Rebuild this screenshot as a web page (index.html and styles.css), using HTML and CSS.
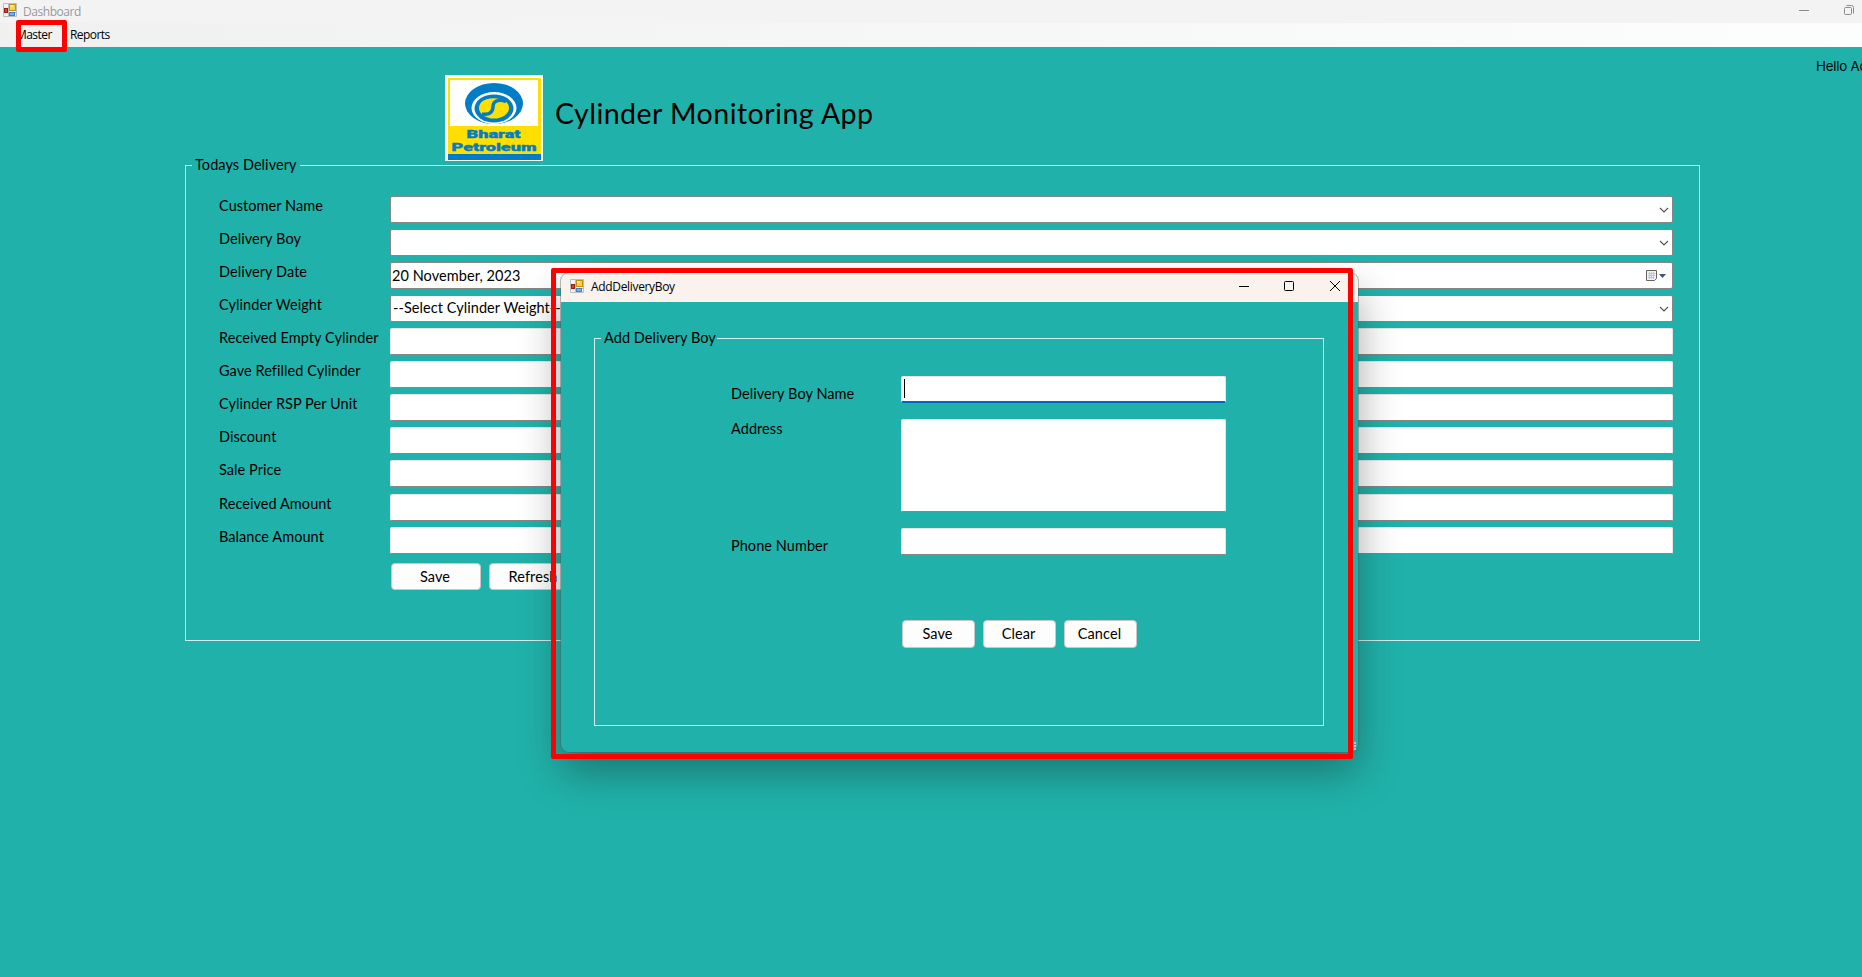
FILE: index.html
```html
<!DOCTYPE html>
<html lang="en">
<head>
<meta charset="utf-8">
<title>Dashboard</title>
<link rel="stylesheet" href="styles.css">
</head>
<body>
<svg width="0" height="0" class="defs">
  <symbol id="app" viewBox="0 0 14 14">
    <path d="M.5.5h13v13H.5zM.5 9.500h13M5.500.5v13" fill="#f4f4f4" stroke="#bcbcbc"/>
    <rect x="6.500" y="1.500" width="6" height="6" fill="#fbd04a" stroke="#c79007"/>
    <rect x="7" y="2" width="3" height="2" fill="#ffeaa0"/>
    <rect x="1.500" y="5.500" width="3" height="4" fill="#d8402c" stroke="#a01c12"/>
    <rect x="6.500" y="9.500" width="5" height="3" fill="#6fb4fa" stroke="#3d80d4"/>
  </symbol>
  <symbol id="chev" viewBox="0 0 10 6"><path d="M1 1l4 4 4-4" fill="none" stroke="#505050" stroke-width="1.100"/></symbol>
</svg>

<header class="titlebar">
  <svg class="app-icon"><use href="#app"/></svg>
  <span class="title">Dashboard</span>
  <svg class="win-controls" width="55" height="12" viewBox="0 0 55 12" fill="none" stroke="#8c8c8c"><path d="M0 6.500h10M47.500 1.500h5q2 0 2 2v6"/><rect x="45.500" y="3.500" width="7" height="7" rx="1"/></svg>
</header>
<nav class="menu"><span class="m-master">Master</span><span>Reports</span></nav>

<main class="page">
  <p class="hello">Hello Admin</p>
  <div class="brand">
    <svg class="logo" width="98" height="86" viewBox="0 0 98 86">
      <path fill="#fff" d="M0 0h98v86H0z"/>
      <path fill="#ffdf00" d="M3 3h93v76H3z"/>
      <path fill="#fff" d="M5 5h88v46H5z"/>
      <path fill="#007dc6" d="M3 79h93v6H3z"/>
      <ellipse cx="49" cy="28.500" rx="29" ry="20.500" fill="#007dc6"/>
      <ellipse cx="49" cy="33" rx="22.500" ry="16" fill="#fff"/>
      <ellipse cx="49" cy="33.500" rx="19.500" ry="14" fill="#007dc6"/>
      <ellipse cx="49" cy="33" rx="15" ry="10.500" fill="#ffdf00"/>
      <path d="M61 26.500c-8-3-13 0-13 5s-3 9-11 7.500" fill="none" stroke="#007dc6" stroke-width="3.500"/>
      <path d="M34 27q14-9 30 0" fill="none" stroke="#007dc6" stroke-width="1.500"/>
      <text x="21.500" y="63" textLength="54" lengthAdjust="spacingAndGlyphs">Bharat</text>
      <text x="6.500" y="76" textLength="85" lengthAdjust="spacingAndGlyphs">Petroleum</text>
    </svg>
    <h1>Cylinder Monitoring App</h1>
  </div>

  <section class="group delivery">
    <h2>Todays Delivery</h2>
    <div class="row"><label>Customer Name</label><div class="field combo"><svg class="chev"><use href="#chev"/></svg></div></div>
    <div class="row"><label>Delivery Boy</label><div class="field combo"><svg class="chev"><use href="#chev"/></svg></div></div>
    <div class="row"><label>Delivery Date</label><div class="field combo date"><span class="v-date">20 November, 2023</span>
      <svg class="cal" width="22" height="14" viewBox="0 0 22 14"><path d="M1.500 1.500h10v8l-2 2h-8z" fill="#eef2f4" stroke="#6b625e"/><path d="M3 4.500h7M3 6.500h7M3 8.500h6M4.500 3v7M6.500 3v7M8.500 3v7" stroke="#b4bcc2" stroke-width=".7"/><path d="M14 5h7l-3.500 4z" fill="#3c5488"/></svg></div></div>
    <div class="row"><label>Cylinder Weight</label><div class="field combo"><span class="v-weight">--Select Cylinder Weight--</span><svg class="chev"><use href="#chev"/></svg></div></div>
    <div class="row"><label>Received Empty Cylinder</label><div class="field"></div></div>
    <div class="row"><label>Gave Refilled Cylinder</label><div class="field"></div></div>
    <div class="row"><label>Cylinder RSP Per Unit</label><div class="field"></div></div>
    <div class="row"><label>Discount</label><div class="field"></div></div>
    <div class="row"><label>Sale Price</label><div class="field"></div></div>
    <div class="row extra"><label>Received Amount</label><div class="field"></div></div>
    <div class="row"><label>Balance Amount</label><div class="field"></div></div>
    <div class="buttons"><button>Save</button><button>Refresh</button></div>
  </section>
</main>

<div class="dialog">
  <header class="dialog-bar">
    <svg class="app-icon"><use href="#app"/></svg>
    <span class="title">AddDeliveryBoy</span>
    <svg class="win-controls" width="102" height="12" viewBox="0 0 102 12" fill="none" stroke="#000"><path d="M0 6.500h10"/><rect x="45.500" y="1.500" width="9" height="9" rx="1"/><path d="M91 1l10 10M101 1L91 11"/></svg>
  </header>
  <section class="group add">
    <h2>Add Delivery Boy</h2>
    <div class="row name"><label>Delivery Boy Name</label><div class="field focus"><i class="caret"></i></div></div>
    <div class="row address"><label>Address</label><div class="field"></div></div>
    <div class="row phone"><label>Phone Number</label><div class="field"></div></div>
    <div class="buttons"><button>Save</button><button>Clear</button><button>Cancel</button></div>
  </section>
  <svg class="grip" width="8" height="8" viewBox="0 0 8 8" fill="#b8c8c8"><path d="M6 0h2v2H6zM6 3h2v2H6zM6 6h2v2H6zM3 3h2v2H3zM3 6h2v2H3zM0 6h2v2H0z"/></svg>
</div>

<div class="mark mark-master"></div>
<div class="mark mark-dialog"></div>
</body>
</html>
```
FILE: styles.css
```css
* { box-sizing: border-box; }
body {
  margin: 0;
  width: 1862px;
  height: 977px;
  overflow: hidden;
  position: relative;
  background: #20b2aa;
  color: #000;
  font: 14.5px/18px Lato, "Noto Sans", sans-serif;
  letter-spacing: 0.06px;
  white-space: nowrap;
}
.defs { position: absolute; }
h1, h2, p { margin: 0; font-weight: 400; }

.titlebar {
  display: flex;
  align-items: center;
  height: 23px;
  padding: 0 8px 3px 3px;
  background: #f3f3f3;
  color: #999;
  font: 12px/16px "Open Sans", sans-serif;
  letter-spacing: -0.45px;
}
.titlebar .title { margin-left: 6px; padding-top: 4px; }
.titlebar .win-controls { margin-right: 0; }
.app-icon { width: 14px; height: 14px; flex: none; }
.win-controls { margin-left: auto; }

.menu {
  display: flex;
  height: 24px;
  padding: 4px 0 0 16px;
  background: linear-gradient(90deg, #f0f0f0, #fdfdfd);
  font: 12px/16px "Open Sans", sans-serif;
  letter-spacing: -0.55px;
}
.m-master { width: 54px; }

.page { display: flex; flex-direction: column; }
.hello {
  height: 28px;
  padding: 10px 0 0 1816px;
  font: 13.3px/18px Inter, sans-serif;
  letter-spacing: -0.2px;
}
.brand { display: flex; padding-left: 445px; height: 86px; }
.logo text {
  font: 900 11px Roboto, sans-serif;
  letter-spacing: 0;
  fill: #007dc6;
  stroke: #007dc6;
  stroke-width: .35px;
}
h1 { margin: 20px 0 0 12px; font-size: 28.5px; line-height: 36px; letter-spacing: 0.48px; }

.group { position: relative; border: 1px solid #d5eeee; }
.group h2 {
  position: absolute;
  background: #20b2aa;
  font-size: 14.5px;
  line-height: 18px;
}
.delivery {
  width: 1515px;
  height: 476px;
  margin: 4px 0 0 185px;
  padding: 30px 26px 0 33px;
}
.delivery h2 { top: -10px; left: 6px; width: 108px; padding-left: 3px; }

.row { display: flex; }
.delivery .row { height: 27px; margin-bottom: 6px; }
.delivery .row label { width: 171px; padding-top: 1px; }
.delivery .row.extra { margin-top: 7px; }
.field {
  display: flex;
  flex: 1;
  height: 27px;
  background: #fff;
  border: 1px solid #e6e6e6;
  border-bottom-color: #868686;
  border-radius: 2px;
}
.combo { align-items: center; border-color: #868686; padding-left: 1px; }
.combo .v-date { padding-top: 1px; }
.combo .v-weight { padding: 0 0 2px 1px; }
.chev { width: 10px; height: 6px; margin-left: auto; margin-right: 3px; }
.cal { margin-left: auto; margin-right: 5px; }

.buttons { display: flex; gap: 8px; }
.delivery .buttons { padding: 3px 0 0 172px; }
button {
  width: 90px;
  height: 27px;
  padding: 0 2px 0 0;
  border: 1px solid #c8c8c8;
  border-radius: 4px;
  background: #fdfdfd;
  color: #000;
  font: 14.5px/18px Lato, sans-serif;
  letter-spacing: 0.1px;
}

.dialog {
  position: absolute;
  left: 561px;
  top: 273px;
  width: 797px;
  height: 479px;
  background: #20b2aa;
  border-radius: 8px;
  box-shadow: 0 0 0 1px rgba(90, 90, 90, .4), 0 20px 42px rgba(20, 20, 20, .38);
}
.dialog-bar {
  display: flex;
  align-items: center;
  height: 29px;
  padding: 0 17px 3px 9px;
  border-radius: 8px 8px 0 0;
  background: #f9f2ed;
  font: 12px/16px "Open Sans", sans-serif;
}
.dialog-bar .title { margin-left: 7px; padding-top: 2px; letter-spacing: -0.33px; }
.add {
  width: 730px;
  height: 388px;
  margin: 36px 0 0 33px;
  padding: 37px 97px 0 136px;
}
.add h2 { top: -10px; left: 6px; width: 116px; padding-left: 3px; }
.add label { width: 170px; }
.name { height: 43px; }
.name label { padding-top: 9px; }
.address { height: 109px; }
.address label { padding-top: 1px; }
.address .field { height: 93px; }
.phone { height: 92px; }
.phone label { padding-top: 9px; }
.focus { border-bottom: 2px solid #0067c0; }
.caret { width: 1px; height: 19px; margin: 2px 0 0 2px; background: #000; }
.add .buttons { padding-left: 171px; }
.add button { width: 73px; height: 28px; }
.grip { position: absolute; right: 2px; bottom: 2px; }

.mark { position: absolute; border: 5px solid #f00; border-radius: 2px; }
.mark-master { left: 16px; top: 20px; width: 51px; height: 32px; }
.mark-dialog { left: 551px; top: 268px; width: 802px; height: 491px; }
```
